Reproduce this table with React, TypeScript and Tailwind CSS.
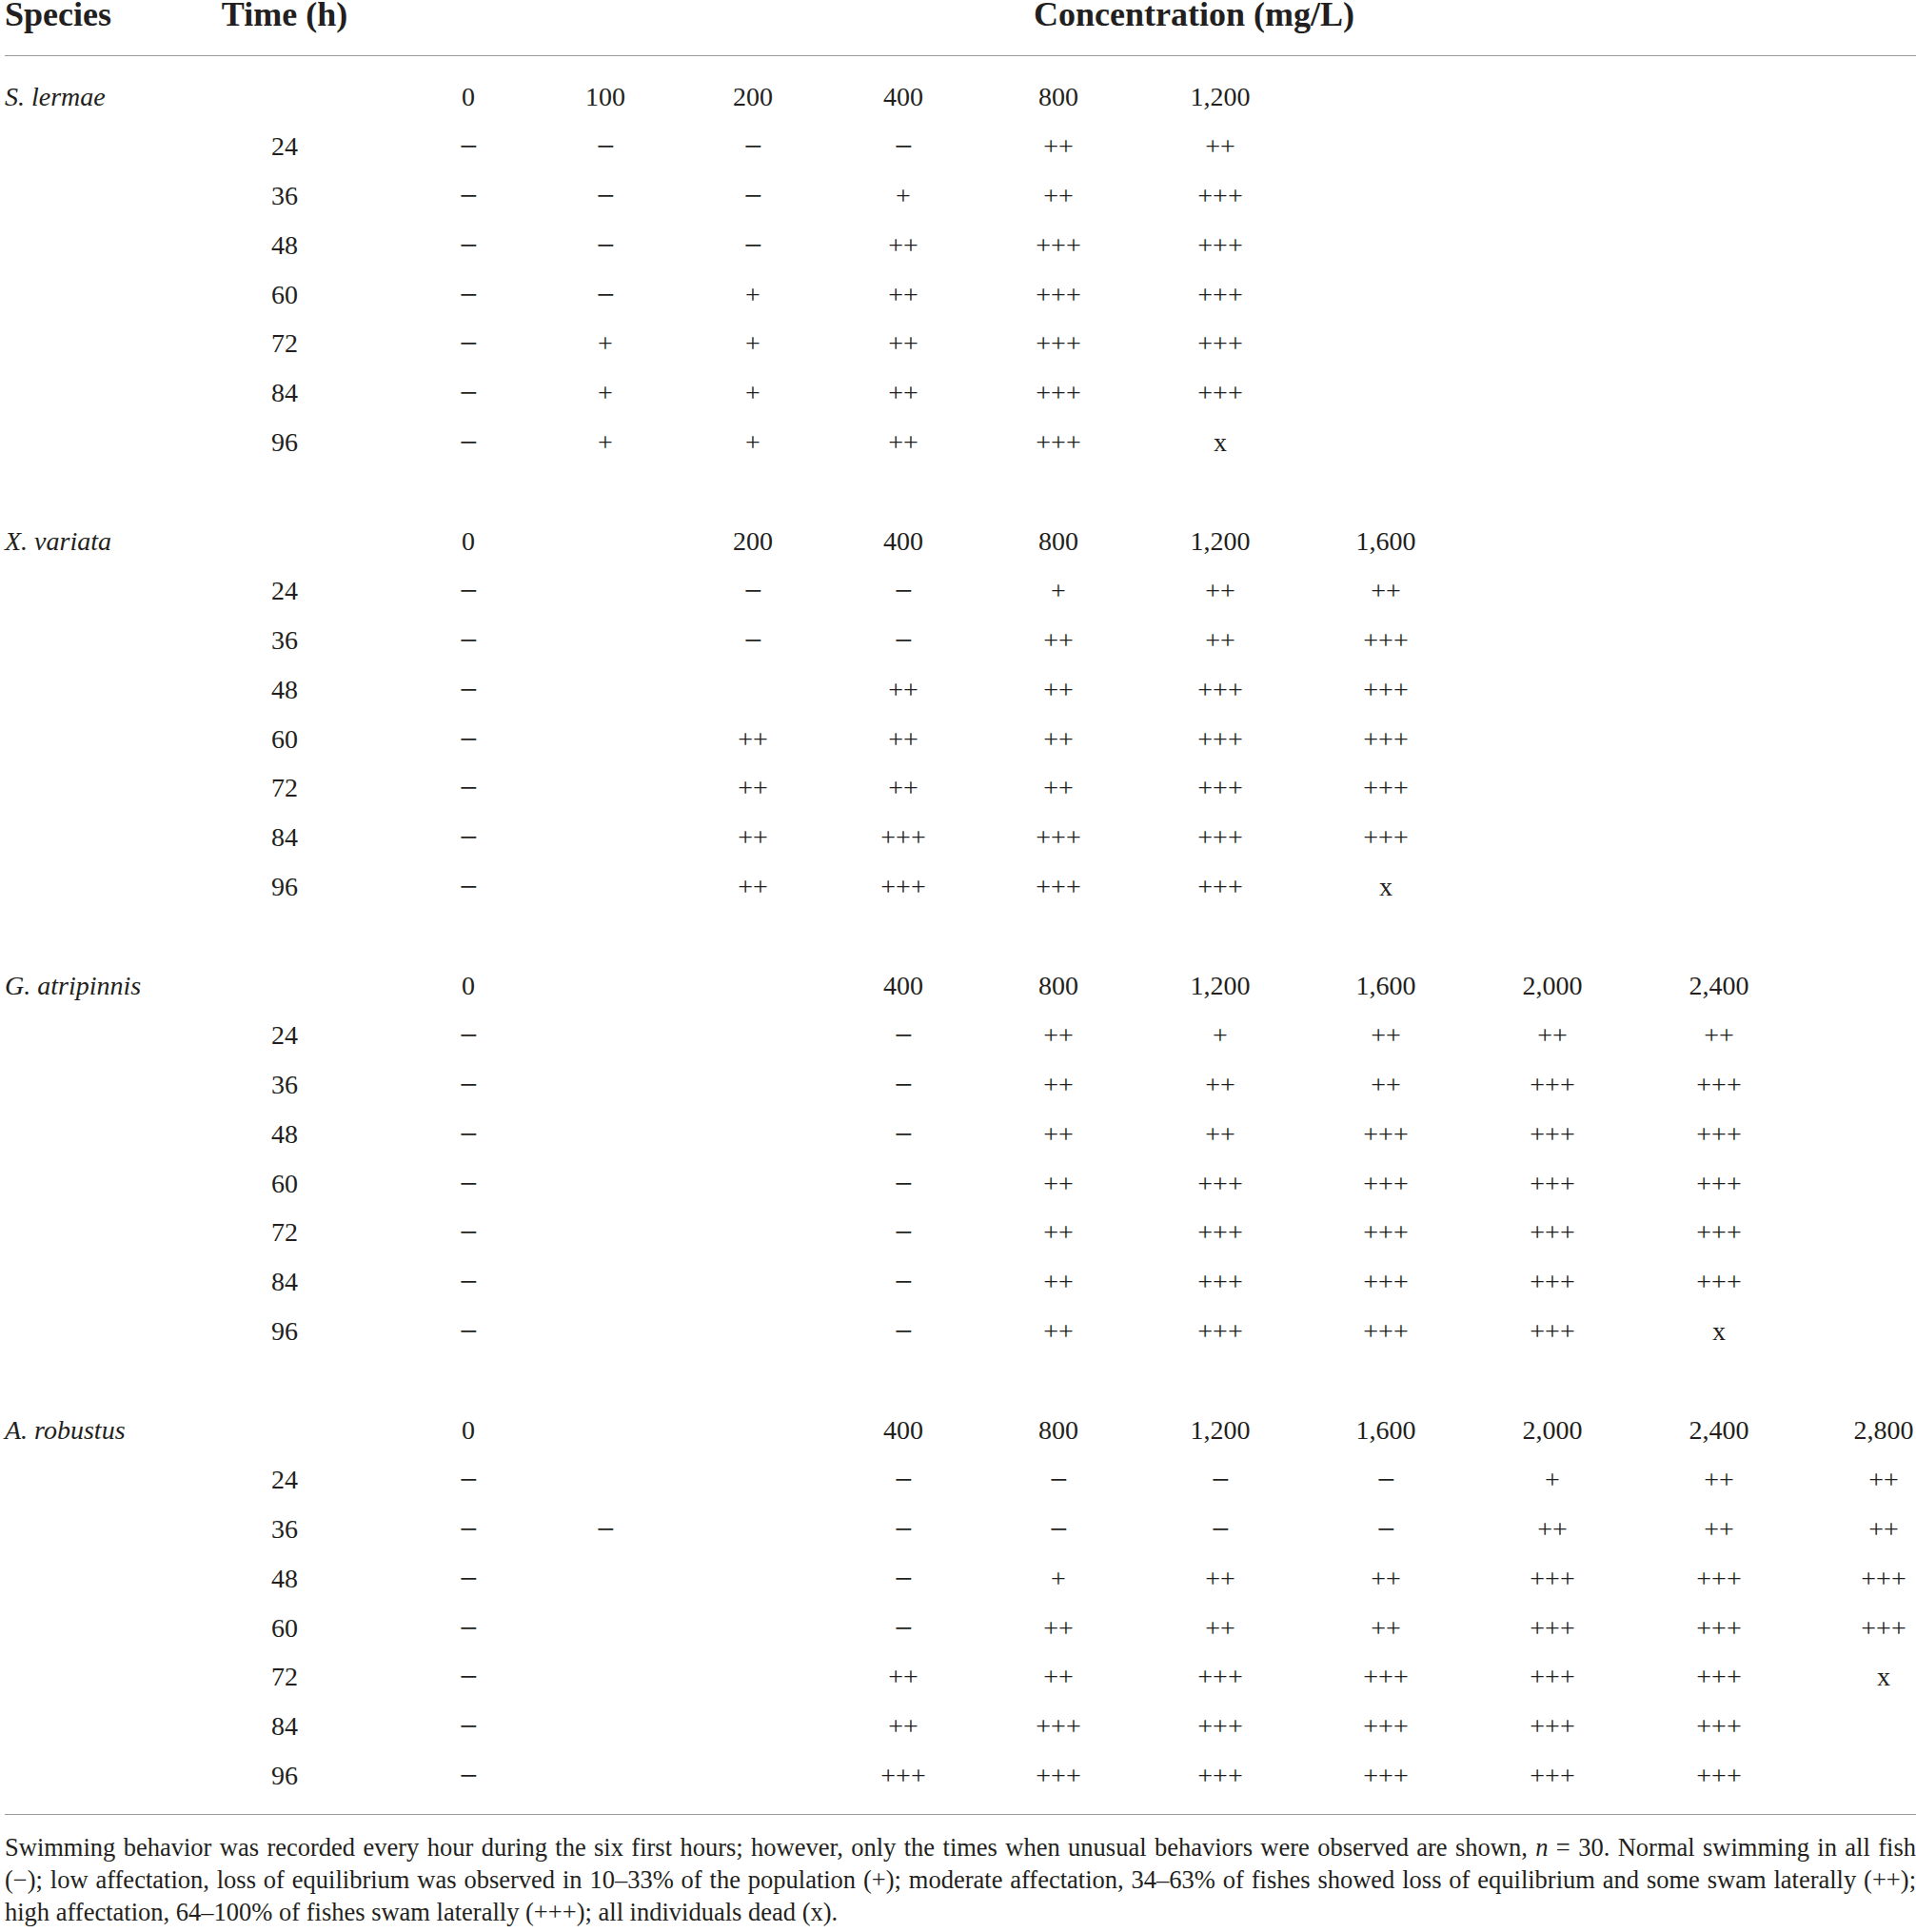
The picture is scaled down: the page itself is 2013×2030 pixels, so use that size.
import type { ReactNode } from "react";

const M = "−";

type Row = { time: string; cells: string[] };

type Group = {
  species: string;
  doses: string[];
  rows: Row[];
};

function row(time: string, ...cells: string[]): Row {
  const padded = [...cells];
  while (padded.length < 10) padded.push("");
  return { time, cells: padded };
}

const groups: Group[] = [
  {
    species: "S. lermae",
    doses: ["0", "100", "200", "400", "800", "1,200", "", "", "", ""],
    rows: [
      row("24", M, M, M, M, "++", "++"),
      row("36", M, M, M, "+", "++", "+++"),
      row("48", M, M, M, "++", "+++", "+++"),
      row("60", M, M, "+", "++", "+++", "+++"),
      row("72", M, "+", "+", "++", "+++", "+++"),
      row("84", M, "+", "+", "++", "+++", "+++"),
      row("96", M, "+", "+", "++", "+++", "x"),
    ],
  },
  {
    species: "X. variata",
    doses: ["0", "", "200", "400", "800", "1,200", "1,600", "", "", ""],
    rows: [
      row("24", M, "", M, M, "+", "++", "++"),
      row("36", M, "", M, M, "++", "++", "+++"),
      row("48", M, "", "", "++", "++", "+++", "+++"),
      row("60", M, "", "++", "++", "++", "+++", "+++"),
      row("72", M, "", "++", "++", "++", "+++", "+++"),
      row("84", M, "", "++", "+++", "+++", "+++", "+++"),
      row("96", M, "", "++", "+++", "+++", "+++", "x"),
    ],
  },
  {
    species: "G. atripinnis",
    doses: ["0", "", "", "400", "800", "1,200", "1,600", "2,000", "2,400", ""],
    rows: [
      row("24", M, "", "", M, "++", "+", "++", "++", "++"),
      row("36", M, "", "", M, "++", "++", "++", "+++", "+++"),
      row("48", M, "", "", M, "++", "++", "+++", "+++", "+++"),
      row("60", M, "", "", M, "++", "+++", "+++", "+++", "+++"),
      row("72", M, "", "", M, "++", "+++", "+++", "+++", "+++"),
      row("84", M, "", "", M, "++", "+++", "+++", "+++", "+++"),
      row("96", M, "", "", M, "++", "+++", "+++", "+++", "x"),
    ],
  },
  {
    species: "A. robustus",
    doses: ["0", "", "", "400", "800", "1,200", "1,600", "2,000", "2,400", "2,800"],
    rows: [
      row("24", M, "", "", M, M, M, M, "+", "++", "++"),
      row("36", M, M, "", M, M, M, M, "++", "++", "++"),
      row("48", M, "", "", M, "+", "++", "++", "+++", "+++", "+++"),
      row("60", M, "", "", M, "++", "++", "++", "+++", "+++", "+++"),
      row("72", M, "", "", "++", "++", "+++", "+++", "+++", "+++", "x"),
      row("84", M, "", "", "++", "+++", "+++", "+++", "+++", "+++"),
      row("96", M, "", "", "+++", "+++", "+++", "+++", "+++", "+++"),
    ],
  },
];

// left gap before each concentration column, so the centres land where the printed table has them
const cellPad = [
  "pl-[125px]",
  "pl-[76px]",
  "pl-[87px]",
  "pl-[90px]",
  "pl-[95px]",
  "pl-[102px]",
  "pl-[106px]",
  "pl-[107px]",
  "pl-[107px]",
  "pl-[105px]",
];

const gridCols =
  "grid grid-cols-[260px_68px_193px_144px_155px_158px_163px_170px_174px_175px_175px_173px] items-center";

function Cell({ value, index }: { value: string; index: number }) {
  return (
    <div className={`flex ${cellPad[index]}`}>
      <div className="flex h-[30px] w-[68px] items-center justify-center whitespace-nowrap">
        {value === M ? <span className="text-[34px] leading-none">{M}</span> : value}
      </div>
    </div>
  );
}

function DoseRow({ species, cells }: { species: ReactNode; cells: string[] }) {
  return (
    <div className={`${gridCols} h-[51.9px]`}>
      <div className="whitespace-nowrap italic">{species}</div>
      <div />
      {cells.map((value, i) => (
        <Cell key={i} value={value} index={i} />
      ))}
    </div>
  );
}

function TimeRow({ time, cells }: Row) {
  return (
    <div className={`${gridCols} h-[51.9px]`}>
      <div />
      <div className="flex justify-center whitespace-nowrap">{time}</div>
      {cells.map((value, i) => (
        <Cell key={i} value={value} index={i} />
      ))}
    </div>
  );
}

export default function App() {
  return (
    <div className="min-h-[2030px] w-[2013px] overflow-hidden bg-white pl-[5px] font-['Liberation_Serif','Times_New_Roman',serif] text-[#231f20]">
      <div className={`${gridCols} text-[36px] font-bold leading-[30px]`}>
        <div className="whitespace-nowrap">Species</div>
        <div className="flex justify-center whitespace-nowrap">Time (h)</div>
        <div className="col-span-10 flex justify-center whitespace-nowrap pl-[163px]">Concentration (mg/L)</div>
      </div>

      <div className="mt-[28px] h-px bg-[#9a9a9a]" />

      <div className="mt-[17px] text-[28px] leading-none">
        {groups.map((group, gi) => (
          <div key={group.species} className={gi > 0 ? "mt-[51.9px]" : ""}>
            <DoseRow species={group.species} cells={group.doses} />
            {group.rows.map((r) => (
              <TimeRow key={r.time} time={r.time} cells={r.cells} />
            ))}
          </div>
        ))}
      </div>

      <div className="mt-[14px] h-px bg-[#9a9a9a]" />

      <div className="mt-[17px] text-[26.5px] leading-[34px]">
        <div className="whitespace-nowrap text-justify [text-align-last:justify]">
          Swimming behavior was recorded every hour during the six first hours; however, only the times when unusual
          behaviors were observed are shown, <span className="italic">n</span> = 30. Normal swimming in all fish
        </div>
        <div className="whitespace-nowrap text-justify [text-align-last:justify]">
          (−); low affectation, loss of equilibrium was observed in 10–33% of the population (+); moderate affectation,
          34–63% of fishes showed loss of equilibrium and some swam laterally (++);
        </div>
        <div className="whitespace-nowrap">
          high affectation, 64–100% of fishes swam laterally (+++); all individuals dead (x).
        </div>
      </div>
    </div>
  );
}
